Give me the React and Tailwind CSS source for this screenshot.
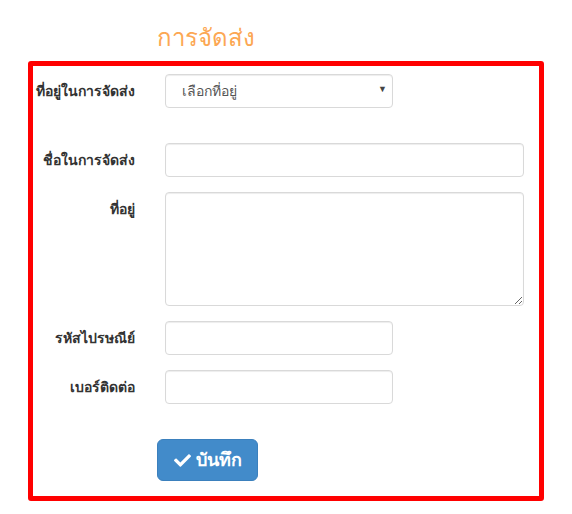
import React from 'react';
import { FaCheck } from 'react-icons/fa';

const inputCls =
  'h-[34px] rounded-[4px] border border-[#d9d9d9] bg-white px-3 text-[14px] text-[#555] shadow-[inset_0_1px_1px_rgba(0,0,0,0.075)] outline-none';

function Row({ label, children, className = '' }) {
  return (
    <div className={`flex items-start ${className}`}>
      <label className="flex h-[34px] w-[102px] shrink-0 items-center justify-end whitespace-nowrap text-[14px] font-bold text-[#333]">
        {label}
      </label>
      <div className="ml-[30px]">{children}</div>
    </div>
  );
}

export default function App() {
  return (
    <div
      className="min-h-screen bg-white"
      style={{ fontFamily: '"Liberation Sans", "Noto Sans", sans-serif' }}
    >
      <h2 className="pl-[157px] pt-[22px] text-[24px] leading-[32px] text-[#fca753]">การจัดส่ง</h2>

      <div className="ml-[28px] mt-[7px] h-[440px] w-[516px] rounded-[3px] border-[5px] border-[#ff0000] pt-[8px]">
        <Row label="ที่อยู่ในการจัดส่ง" className="mb-[35px]">
          <div className="relative">
            <select className={`${inputCls} w-[228px] appearance-none pl-[16px]`} defaultValue="">
              <option value="">เลือกที่อยู่</option>
            </select>
            <span className="pointer-events-none absolute right-[6px] top-[9px] text-[9px] text-[#444]">▼</span>
          </div>
        </Row>

        <Row label="ชื่อในการจัดส่ง" className="mb-[15px]">
          <input className={`${inputCls} w-[359px]`} />
        </Row>

        <Row label="ที่อยู่" className="mb-[15px]">
          <textarea className={`${inputCls} block h-[114px] w-[359px] resize`} />
        </Row>

        <Row label="รหัสไปรษณีย์" className="mb-[15px]">
          <input className={`${inputCls} w-[228px]`} />
        </Row>

        <Row label="เบอร์ติดต่อ" className="mb-[35px]">
          <input className={`${inputCls} w-[228px]`} />
        </Row>

        <div className="pl-[124px]">
          <button className="flex h-[42px] w-[101px] items-center justify-center gap-[5px] rounded-[6px] border border-[#3b80bd] bg-[#428bca] text-[18px] font-bold text-white">
            <FaCheck className="h-[17px] w-[17px]" />
            <span>บันทึก</span>
          </button>
        </div>
      </div>
    </div>
  );
}
